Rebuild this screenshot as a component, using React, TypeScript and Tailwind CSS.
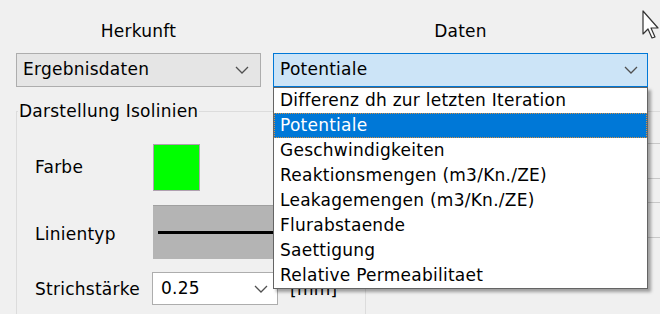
const items = [
    "Differenz dh zur letzten Iteration",
    "Potentiale",
    "Geschwindigkeiten",
    "Reaktionsmengen (m3/Kn./ZE)",
    "Leakagemengen (m3/Kn./ZE)",
    "Flurabstaende",
    "Saettigung",
    "Relative Permeabilitaet",
];

const Chevron = () => (
    <svg width="14" height="8" viewBox="0 0 14 8" className="shrink-0">
        <polyline points="1,1 7,7 13,1" fill="none" stroke="#505050" strokeWidth="1.3" />
    </svg>
);

const App = () => {
    return (
        <div className="relative w-[660px] h-[314px] overflow-hidden bg-[#f0f0f0] text-[17px] tracking-[0.25px] text-black font-['DejaVu_Sans',sans-serif]">
            {/* Kopfzeile */}
            <div className="flex gap-3 pl-4 pt-[18px]">
                <div className="w-[245px] flex flex-col">
                    <div className="h-[35px] text-center leading-[26px]">Herkunft</div>
                    <div className="h-[34px] flex items-center justify-between pl-[6px] pr-[11px] bg-[#e5e5e5] border border-[#adadad]">
                        <span>Ergebnisdaten</span>
                        <Chevron />
                    </div>
                </div>
                <div className="w-[375px] flex flex-col">
                    <div className="h-[35px] text-center leading-[26px]">Daten</div>
                    <div className="h-[34px] flex items-center justify-between pl-[6px] pr-[9px] bg-[#cce4f7] border border-[#0078d7]">
                        <span>Potentiale</span>
                        <Chevron />
                    </div>
                </div>
            </div>

            {/* Gruppen */}
            <div className="flex mt-[13px]">
                <div className="relative ml-4 w-[350px] h-[220px] mt-[11px] border-l border-t border-r border-[#dcdcdc]">
                    <div className="absolute -top-[13px] left-[1px] px-[1px] bg-[#f0f0f0] leading-[24px]">Darstellung Isolinien</div>
                    <div className="flex flex-col pt-[32px] pl-[18px]">
                        <div className="flex items-center h-[47px]">
                            <span className="w-[118px]">Farbe</span>
                            <div className="w-[47px] h-[47px] bg-[#00ff00] border border-[#b0a0b0]" />
                        </div>
                        <div className="flex items-center h-[54px] mt-[14px]">
                            <span className="w-[118px] pt-[6px]">Linientyp</span>
                            <div className="w-[200px] h-[54px] bg-[#b4b4b4] border-t border-[#a0a0a0] flex items-center pl-[5px]">
                                <div className="w-full h-[3px] bg-black" />
                            </div>
                        </div>
                        <div className="flex items-center h-[33px] mt-[13px]">
                            <span className="w-[117px] pt-[3px]">Strichstärke</span>
                            <div className="w-[126px] h-[33px] bg-white border border-[#adadad] flex items-center justify-between pl-[8px] pr-[9px]">
                                <span>0.25</span>
                                <Chevron />
                            </div>
                            <span className="ml-[12px] pt-[3px]">[mm]</span>
                        </div>
                    </div>
                </div>
                <div className="ml-[8px] flex-1 h-[220px] mt-[11px] border-t border-[#dcdcdc] flex flex-col">
                    <div className="h-[32px] border-b border-[#c8c8c8]" />
                    <div className="h-[35px] border-b border-[#c8c8c8]" />
                    <div className="h-[24px] border-b border-[#c8c8c8]" />
                    <div className="h-[35px] border-b border-[#c8c8c8]" />
                </div>
            </div>

            {/* Aufgeklappte Liste */}
            <div className="absolute left-[273px] top-[87px] w-[375px] bg-white border border-[#646464] shadow-[3px_3px_3px_rgba(0,0,0,0.35)]">
                {items.map((item, i) => (
                    <div
                        key={item}
                        className={
                            i === 1
                                ? "h-[25px] leading-[23px] pl-[5px] bg-[#0078d7] text-white border border-dotted border-[#d89040]"
                                : "h-[25px] leading-[25px] pl-[6px]"
                        }
                    >
                        {item}
                    </div>
                ))}
            </div>

            {/* Mauszeiger */}
            <svg className="absolute left-[642px] top-[10px]" width="20" height="32" viewBox="0 0 20 32">
                <path d="M1 1 L1 24 L6 19 L10 28 L13 27 L9 18 L16 18 Z" fill="white" stroke="#333" strokeWidth="1.2" strokeLinejoin="round" />
            </svg>
        </div>
    );
};

export default App;
